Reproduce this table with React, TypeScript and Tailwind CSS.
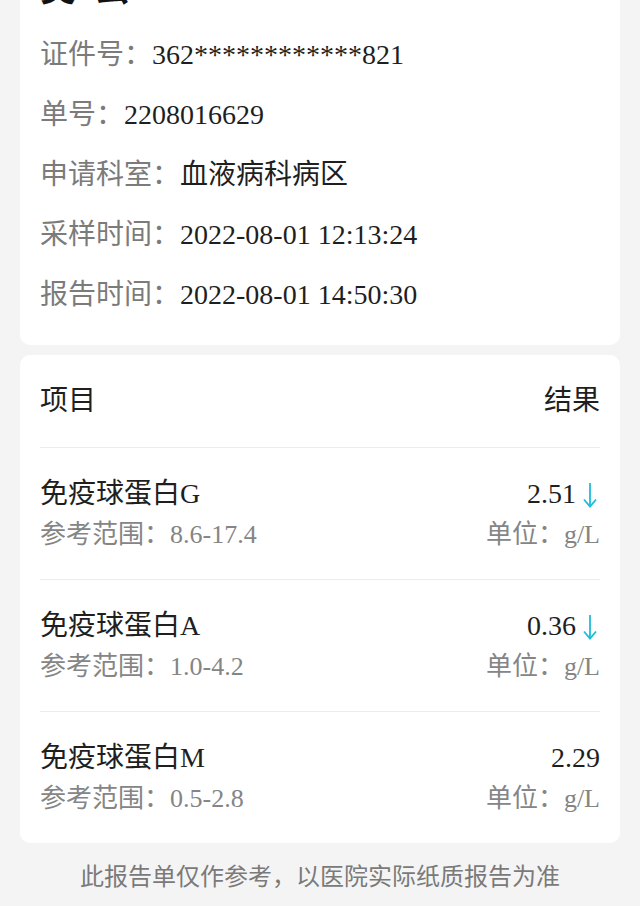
import React from "react";

const FONT = { fontFamily: '"Liberation Serif", "Noto Sans CJK SC", serif' };

function InfoRow({ label, value }: { label: string; value: string }) {
  return (
    <div className="flex h-[60px] items-center text-[28px]">
      <span className="text-[#7b7b7b]">{label}</span>
      <span className="text-[#1f1f1f]">{value}</span>
    </div>
  );
}

function DownArrow() {
  return (
    <svg width="16" height="28" viewBox="0 0 16 28" className="ml-[6px] mr-[2px] mt-[2px]">
      <line x1="8" y1="2" x2="8" y2="25" stroke="#1cbcdc" strokeWidth="1.8" />
      <path d="M2 18.5 L8 25.5 L14 18.5" fill="none" stroke="#1cbcdc" strokeWidth="1.8" />
    </svg>
  );
}

function Item({ name, value, range, low }: { name: string; value: string; range: string; low?: boolean }) {
  return (
    <div className="border-t border-[#ececec] pt-[26px] pb-[25px]">
      <div className="flex h-[40px] items-center justify-between text-[28px] text-[#1f1f1f]">
        <span>{name}</span>
        <span className="flex items-center">
          <span>{value}</span>
          {low && <DownArrow />}
        </span>
      </div>
      <div className="flex h-[40px] items-center justify-between text-[26px] text-[#858585]">
        <span>参考范围：{range}</span>
        <span>单位：g/L</span>
      </div>
    </div>
  );
}

export default function App() {
  return (
    <div className="min-h-[906px] bg-[#f4f4f4] px-[20px] pb-[10px] overflow-hidden" style={FONT}>
      <div className="-mt-[61px] rounded-[10px] bg-white px-[20px] pt-[20px] pb-[20px]">
        <div className="mb-[6px] flex h-[60px] items-center text-[36px] font-bold text-[#111]">吴*云</div>
        <InfoRow label="证件号：" value="362************821" />
        <InfoRow label="单号：" value="2208016629" />
        <InfoRow label="申请科室：" value="血液病科病区" />
        <InfoRow label="采样时间：" value="2022-08-01 12:13:24" />
        <InfoRow label="报告时间：" value="2022-08-01 14:50:30" />
      </div>
      <div className="mt-[10px] rounded-[10px] bg-white px-[20px]">
        <div className="flex h-[92px] items-center justify-between text-[28px] text-[#1f1f1f]">
          <span>项目</span>
          <span>结果</span>
        </div>
        <Item name="免疫球蛋白G" value="2.51" range="8.6-17.4" low />
        <Item name="免疫球蛋白A" value="0.36" range="1.0-4.2" low />
        <Item name="免疫球蛋白M" value="2.29" range="0.5-2.8" />
      </div>
      <div className="mt-[14px] flex h-[40px] items-center justify-center text-[24px] text-[#7a7a7a]">
        此报告单仅作参考，以医院实际纸质报告为准
      </div>
    </div>
  );
}
